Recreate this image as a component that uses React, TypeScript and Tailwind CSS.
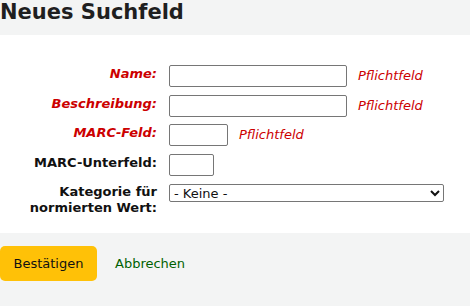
import React from 'react';

// Felder der Maske
interface Field {
  label: string;
  required: boolean;
  width: string;
}

const fields: Field[] = [
  { label: 'Name:', required: true, width: 'w-[178px]' },
  { label: 'Beschreibung:', required: true, width: 'w-[178px]' },
  { label: 'MARC-Feld:', required: true, width: 'w-[59px]' },
  { label: 'MARC-Unterfeld:', required: false, width: 'w-[45px]' },
];

const App: React.FC = () => {
  return (
    <div className="min-h-[306px] bg-[#f3f4f4] font-['DejaVu_Sans',sans-serif] text-[13px] text-[#111]">
      <h1 className="h-[35px] pl-0 text-[21px] font-bold leading-[24px] text-[#1f1f1f]">Neues Suchfeld</h1>

      <fieldset className="bg-white pt-[30px] pb-[17px]">
        <ol className="flex flex-col gap-[8px]">
          {fields.map((f, i) => (
            <li key={f.label} className={`flex items-center ${i === 2 ? '-mt-[1px]' : ''}`}>
              <label
                className={`w-[157px] self-start pt-[1px] text-right font-bold leading-[16px] ${
                  f.required ? 'italic text-[#c00]' : 'text-[#111]'
                }`}
              >
                {f.label}
              </label>
              <input
                type="text"
                className={`ml-[12px] h-[22px] rounded-[2px] border border-[#767676] bg-white ${f.width}`}
              />
              {f.required && <span className="ml-[11px] italic text-[#c00]">Pflichtfeld</span>}
            </li>
          ))}
          <li className="flex items-start">
            <label className="w-[157px] text-right font-bold leading-[16px]">
              Kategorie für
              <br />
              normierten Wert:
            </label>
            <select className="ml-[12px] h-[18px] w-[275px] rounded-[2px] border border-[#767676] bg-white text-[13px] leading-[16px]">
              <option>- Keine -</option>
            </select>
          </li>
        </ol>
      </fieldset>

      <div className="flex items-center pt-[13px]">
        <button className="h-[35px] w-[97px] rounded-[5px] bg-[#ffc107] text-[13px] text-[#111]">Bestätigen</button>
        <a className="ml-[18px] text-[#006100]" href="#">
          Abbrechen
        </a>
      </div>
    </div>
  );
};

export default App;
